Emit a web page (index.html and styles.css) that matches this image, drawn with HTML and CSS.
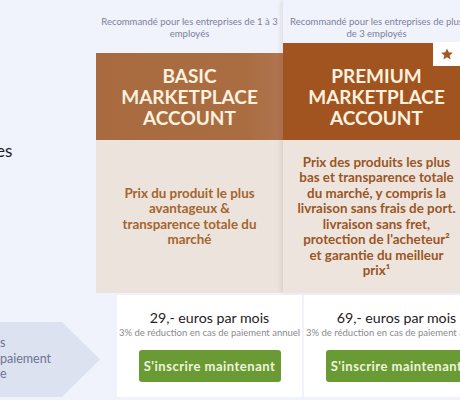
FILE: index.html
```html
<!DOCTYPE html>
<html lang="fr">
<head>
<meta charset="utf-8">
<link rel="stylesheet" href="styles.css">
</head>
<body>
<div class="page">
  <div class="top">
    <div class="side">
      <h2 class="side-title">es</h2>
    </div>
    <div class="plan basic">
      <p class="rec">Recommandé pour les entreprises de 1 à 3<br>employés</p>
      <div class="head"><h3>BASIC<br>MARKETPLACE<br>ACCOUNT</h3></div>
      <div class="feat"><p>Prix du produit le plus<br>avantageux &amp;<br>transparence totale du<br>marché</p></div>
    </div>
    <div class="plan premium">
      <p class="rec">Recommandé pour les entreprises de plus<br>de 3 employés</p>
      <div class="head">
        <h3>PREMIUM<br>MARKETPLACE<br>ACCOUNT</h3>
        <span class="badge"><svg width="14" height="14" viewBox="0 0 24 24"><path d="M12 2.5l2.9 6.6 7.1.6-5.4 4.7 1.6 7-6.2-3.7-6.2 3.7 1.6-7L2 9.7l7.1-.6z" fill="#a3582a"/></svg></span>
      </div>
      <div class="feat"><p>Prix des produits les plus<br>bas et transparence totale<br>du marché, y compris la<br>livraison sans frais de port.<br>livraison sans fret,<br>protection de l'acheteur²<br>et garantie du meilleur<br>prix¹</p></div>
    </div>
  </div>
  <div class="bottom">
    <div class="side2">
      <div class="arrow"><span>s<br>paiement<br>e</span></div>
    </div>
    <div class="price">
      <div class="amount">29,- euros par mois</div>
      <div class="disc">3% de réduction en cas de paiement annuel</div>
      <button class="btn">S'inscrire maintenant</button>
    </div>
    <div class="price">
      <div class="amount">69,- euros par mois</div>
      <div class="disc">3% de réduction en cas de paiement annuel</div>
      <button class="btn">S'inscrire maintenant</button>
    </div>
  </div>
</div>
</body>
</html>
```
FILE: styles.css
```css
html, body {
  margin: 0;
  padding: 0;
  background: #f0f3fb;
  font-family: Lato, "Liberation Sans", sans-serif;
  overflow: hidden;
}
.page {
  width: 460px;
  height: 400px;
  overflow: hidden;
}
.top {
  display: flex;
  align-items: stretch;
}
.side {
  width: 96px;
  flex: none;
  padding-top: 141px;
  box-sizing: border-box;
}
.side-title {
  margin: 0 0 0 -4px;
  font-size: 17px;
  line-height: 20px;
  font-weight: 400;
  color: #1b1c2a;
}
.plan {
  width: 187px;
  flex: none;
  display: flex;
  flex-direction: column;
  position: relative;
}
.rec {
  margin: 0;
  padding: 16px 0 0;
  height: 53px;
  box-sizing: border-box;
  font-size: 9.5px;
  line-height: 12px;
  text-align: center;
  color: #7b809c;
  white-space: nowrap;
}
.head {
  height: 87px;
  display: flex;
  align-items: center;
  justify-content: center;
  position: relative;
  box-sizing: border-box;
}
.basic .head {
  background: linear-gradient(90deg, #a86a3e 0%, #aa6d42 80%, #b07550 100%);
}
.premium .head {
  background: #a1541f;
  margin-top: -10px;
  height: 97px;
  padding-top: 10px;
}
.head h3 {
  margin: 0;
  font-size: 19px;
  line-height: 21px;
  font-weight: 700;
  text-align: center;
  color: #fdf1df;
}
.badge {
  position: absolute;
  top: -1px;
  right: 9px;
  width: 28px;
  height: 24px;
  background: #fff;
  display: flex;
  align-items: center;
  justify-content: center;
}
.feat {
  height: 153px;
  background: #ece4dc;
  display: flex;
  align-items: center;
  justify-content: center;
  padding: 0 6px;
  box-sizing: border-box;
}
.premium .feat {
  background: #ede5dd;
}
.premium {
  box-shadow: -3px 0 4px -1px rgba(90, 60, 30, 0.12);
}
.feat p {
  margin: 0;
  font-size: 13.4px;
  line-height: 15.5px;
  font-weight: 700;
  text-align: center;
  color: #a6642e;
  white-space: nowrap;
}
.premium .feat p {
  color: #9b5525;
}
.bottom {
  display: flex;
  margin-top: 2px;
  gap: 2px;
}
.side2 {
  width: 115px;
  flex: none;
  display: flex;
  align-items: flex-end;
}
.arrow {
  width: 100px;
  height: 75px;
  background: #dde2f0;
  clip-path: polygon(0 0, 62px 0, 100% 50%, 62px 100%, 0 100%);
  display: flex;
  align-items: center;
  padding-bottom: 2px;
  box-sizing: border-box;
}
.arrow span {
  font-size: 12.5px;
  line-height: 15.5px;
  color: #6b7395;
}
.price {
  width: 185px;
  flex: none;
  background: #fff;
  padding: 14px 0 15px;
  display: flex;
  flex-direction: column;
  align-items: center;
  box-sizing: border-box;
  height: 102px;
}
.amount {
  font-size: 14.2px;
  line-height: 18px;
  color: #1f2024;
  white-space: nowrap;
}
.disc {
  font-size: 9.5px;
  line-height: 12px;
  color: #8a8a8e;
  white-space: nowrap;
}
.btn {
  margin-top: 11px;
  height: 32px;
  width: 142px;
  flex: none;
  border: none;
  border-radius: 3px;
  background: #6a9a34;
  color: #eef5dc;
  font-family: Lato, "Liberation Sans", sans-serif;
  font-size: 13px;
  font-weight: 700;
  letter-spacing: 0.5px;
  padding: 0;
  white-space: nowrap;
}
```
